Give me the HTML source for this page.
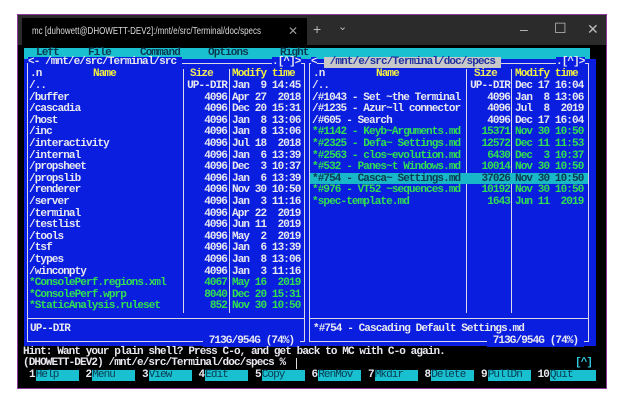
<!DOCTYPE html>
<html><head><meta charset="utf-8"><style>
html,body{margin:0;padding:0;background:#fff;width:625px;height:403px;overflow:hidden}
#win{position:absolute;left:17px;top:14px;width:590px;height:375px;border:1px solid #8a3a9a;background:#000;box-sizing:border-box}
#tb{position:absolute;left:18px;top:15px;width:588px;height:30px;background:#2b2b2b}
#tab{position:absolute;left:22px;top:18px;width:285px;height:27px;background:#000;color:#ddd;font:10.5px "Liberation Sans",sans-serif;line-height:27px;white-space:nowrap;overflow:hidden}
#tab span.tx{position:absolute;left:10px;top:0;transform:scaleX(0.76);transform-origin:0 50%}
.ic{position:absolute;color:#bbb;font:14px "Liberation Sans",sans-serif}
.t{position:absolute;font:bold 11px "Liberation Mono",monospace;letter-spacing:-0.9px;white-space:pre;line-height:11px;color:#e8e8f0}
.y{color:#f4f040}.g{color:#30e050}.d{color:#0a3a50}
.r{text-align:right}
.h{position:absolute;height:1px;background:#d8d8e8}
.v{position:absolute;width:1px;background:#d8d8e8}
</style></head><body>
<div id="win"></div>
<div id="tb"></div>
<div id="tab"><span class="tx">mc [duhowett@DHOWETT-DEV2]:/mnt/e/src/Terminal/doc/specs</span><span style="position:absolute;left:266px;color:#999;font-size:12px">✕</span></div>
<div class="ic" style="left:313px;top:21px">+</div>
<div class="ic" style="left:338px;top:20px;font-size:11px">⌄</div>
<div class="ic" style="left:520px;top:21px">–</div>
<div class="ic" style="left:554px;top:20px">☐</div>
<div class="ic" style="left:587px;top:21px">✕</div>
<div style="position:absolute;left:24px;top:48px;width:566px;height:11px;background:#18c0d0"></div>
<div class="t d" style="left:36px;top:48px">Left</div>
<div class="t d" style="left:88px;top:48px">File</div>
<div class="t d" style="left:140px;top:48px">Command</div>
<div class="t d" style="left:208px;top:48px">Options</div>
<div class="t d" style="left:280px;top:48px">Right</div>
<div style="position:absolute;left:24px;top:59px;width:572px;height:287px;background:#0a1ee0"></div>
<div class="h" style="left:27px;top:63px;width:277px"></div>
<div class="v" style="left:27px;top:63px;height:279px"></div>
<div class="v" style="left:304px;top:63px;height:279px"></div>
<div class="h" style="left:27px;top:318px;width:277px"></div>
<div class="h" style="left:27px;top:341px;width:277px"></div>
<div class="v" style="left:183px;top:69px;height:244px"></div>
<div class="v" style="left:229px;top:69px;height:244px"></div>
<div class="h" style="left:309px;top:63px;width:280px"></div>
<div class="v" style="left:309px;top:63px;height:279px"></div>
<div class="v" style="left:588px;top:63px;height:279px"></div>
<div class="h" style="left:309px;top:318px;width:280px"></div>
<div class="h" style="left:309px;top:341px;width:280px"></div>
<div class="v" style="left:466px;top:69px;height:244px"></div>
<div class="v" style="left:511px;top:69px;height:244px"></div>
<div class="t" style="left:28px;top:57px;background:#0a1ee0">&lt;- /mnt/e/src/Terminal/src </div>
<div class="t" style="left:272px;top:57px;background:#0a1ee0">.[^]&gt;</div>
<div class="t" style="left:311px;top:57px;background:#0a1ee0">&lt;</div>
<div class="t" style="left:324px;top:57px;background:#c8c8c8;color:#2030a0"> /mnt/e/src/Terminal/doc/specs </div>
<div class="t" style="left:556px;top:57px;background:#0a1ee0">.[^]&gt;</div>
<div class="t" style="left:30px;top:69px">.n</div>
<div class="t y" style="left:93px;top:69px">Name</div>
<div class="t" style="left:190px;top:69px;color:#f0e860">Size</div>
<div class="t y" style="left:232px;top:69px">Modify time</div>
<div class="t" style="left:313px;top:69px">.n</div>
<div class="t y" style="left:376px;top:69px">Name</div>
<div class="t" style="left:474px;top:69px;color:#f0e860">Size</div>
<div class="t y" style="left:515px;top:69px">Modify time</div>
<div id="L"></div><div id="R"></div>
<div class="t" style="left:30px;top:324px">UP--DIR</div>
<div class="t" style="left:203px;top:336px;background:#0a1ee0"> 713G/954G (74%) </div>
<div class="t" style="left:313px;top:324px">*#754 - Cascading Default Settings.md</div>
<div class="t" style="left:487px;top:336px;background:#0a1ee0"> 713G/954G (74%) </div>
<div class="t" style="left:23px;top:347px">Hint: Want your plain shell? Press C-o, and get back to MC with C-o again.</div>
<div class="t" style="left:23px;top:358px">(DHOWETT-DEV2) /mnt/e/src/Terminal/doc/specs % </div>
<div style="position:absolute;left:296px;top:358px;width:1px;height:11px;background:#ddd"></div>
<div class="t" style="left:575px;top:358px;color:#30c8e0">[^]</div>
<div id="F"></div>
<script>
var L=[["/..","UP--DIR","Jan  9 14:45",0],["/buffer","4096","Apr 27  2018",0],["/cascadia","4096","Dec 20 15:31",0],["/host","4096","Jan  8 13:06",0],["/inc","4096","Jan  8 13:06",0],["/interactivity","4096","Jul 18  2018",0],["/internal","4096","Jan  6 13:39",0],["/propsheet","4096","Dec  3 10:37",0],["/propslib","4096","Jan  6 13:39",0],["/renderer","4096","Nov 30 10:50",0],["/server","4096","Jan  3 11:16",0],["/terminal","4096","Apr 22  2019",0],["/testlist","4096","Jun 11  2019",0],["/tools","4096","May  2  2019",0],["/tsf","4096","Jan  6 13:39",0],["/types","4096","Jan  8 13:06",0],["/winconpty","4096","Jan  3 11:16",0],["*ConsolePerf.regions.xml","4067","May 16  2019",1],["*ConsolePerf.wprp","8040","Dec 20 15:31",1],["*StaticAnalysis.ruleset","852","Nov 30 10:50",1]];
var R=[["/..","UP--DIR","Dec 17 16:04",0],["/#1043 - Set ~the Terminal","4096","Jan  8 13:06",0],["/#1235 - Azur~ll connector","4096","Jul  8  2019",0],["/#605 - Search","4096","Dec 17 16:04",0],["*#1142 - Keyb~Arguments.md","15371","Nov 30 10:50",1],["*#2325 - Defa~ Settings.md","12572","Dec 11 11:53",1],["*#2563 - clos~evolution.md","6430","Dec  3 10:37",1],["*#532 - Panes~t Windows.md","10014","Nov 30 10:50",1],["*#754 - Casca~ Settings.md","37026","Nov 30 10:50",2],["*#976 - VT52 ~sequences.md","10192","Nov 30 10:50",1],["*spec-template.md","1643","Jun 11  2019",1]];
function esc(s){return s.replace(/&/g,"&amp;").replace(/</g,"&lt;")}
function build(arr,nx,se,dx,el,hx,hw){var h="";arr.forEach(function(r,i){var y=81+i*11.6;var c=r[3]==1?"t g":"t";
if(r[3]==2){h+='<div style="position:absolute;left:'+hx+'px;top:'+(y-1)+'px;width:'+hw+'px;height:11px;background:#18b8c8"></div>';c="t d";}
h+='<div class="'+c+'" style="left:'+nx+'px;top:'+y+'px">'+esc(r[0])+'</div>';
h+='<div class="'+c+' r" style="left:'+(se-60)+'px;width:60px;top:'+y+'px">'+r[1]+'</div>';
h+='<div class="'+c+'" style="left:'+dx+'px;top:'+y+'px">'+r[2]+'</div>';});
document.getElementById(el).innerHTML=h;}
build(L,29,227,232,"L",0,0);
build(R,312,510,515,"R",310,278);
var F=["Help","Menu","View","Edit","Copy","RenMov","Mkdir","Delete","PullDn","Quit"],h="";
F.forEach(function(f,i){var x=29+i*56.5;var n=String(i+1);
h+='<div class="t" style="left:'+x+'px;top:370px">'+n+'</div>';
var bx=x+(n.length*5.7)+1;
h+='<div class="t d" style="left:'+bx+'px;top:370px;width:'+(i==9?46:43)+'px;background:#18c0d0;height:11px;font-weight:normal">'+f+'</div>';});
document.getElementById("F").innerHTML=h;
</script>
</body></html>
